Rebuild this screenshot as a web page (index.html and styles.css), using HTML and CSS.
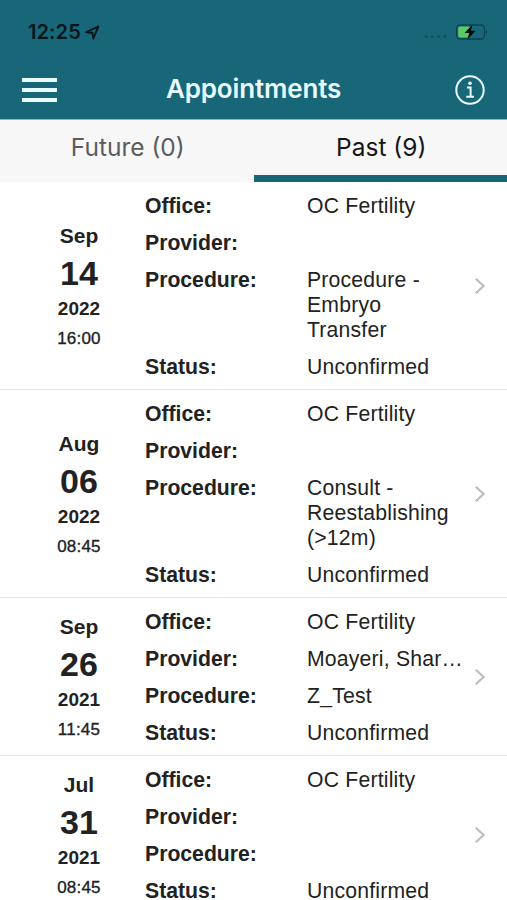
FILE: index.html
```
<!DOCTYPE html>
<html lang="en">

<head>
    <meta charset="UTF-8">
    <meta name="viewport" content="width=device-width, initial-scale=1.0">
    <title>Appointments</title>
    <link rel="stylesheet" href="styles.css">
</head>

<body>

    <header class="header">
        <div class="status-bar">
            <span class="clock">12:25</span>
            <svg class="location" width="15" height="15" viewBox="0 0 15 15">
                <path d="M1.3 7.2 L13.5 1.4 L8.3 13.4 L7.4 7.8 Z" />
            </svg>
            <svg class="signal" width="24" height="5" viewBox="0 0 24 5">
                <circle cx="2" cy="2.5" r="1.2" />
                <circle cx="8.3" cy="2.5" r="1.2" />
                <circle cx="14.6" cy="2.5" r="1.2" />
                <circle cx="21" cy="2.5" r="1.2" />
            </svg>
            <svg class="battery" width="34" height="18" viewBox="0 0 34 18">
                <rect x="1.7" y="2" width="27.8" height="14" rx="3.5" fill="none" stroke="#0d4350" stroke-width="1.3" />
                <path d="M31 7 Q33.4 9 31 11 Z" fill="#0d4350" />
                <rect x="3.2" y="3.5" width="12" height="11" rx="1.6" fill="#5bc964" />
                <path d="M17.5 1.5 L9.5 10 H14.2 L12.4 16.5 L20.6 7.8 H15.8 Z" fill="#02090b" />
            </svg>
        </div>
        <div class="nav-bar">
            <button class="menu" aria-label="Menu"><i></i><i></i><i></i></button>
            <h1>Appointments</h1>
            <button class="info" aria-label="Info">
                <svg width="30" height="30" viewBox="0 0 30 30" fill="none" stroke="#e9fbff">
                    <circle cx="15" cy="15" r="13.7" stroke-width="2" />
                    <path d="M12 12.6 H15.6 V21.6 M11.2 21.8 H19" stroke-width="2" />
                    <circle cx="15" cy="8.3" r="1.8" fill="#e9fbff" stroke="none" />
                </svg>
            </button>
        </div>
    </header>

    <nav class="tabs">
        <a class="tab">Future (0)</a>
        <a class="tab tab--active">Past (9)</a>
    </nav>

    <main class="list">

        <section class="item">
            <div class="date">
                <span class="month">Sep</span>
                <span class="day">14</span>
                <span class="year">2022</span>
                <span class="time">16:00</span>
            </div>
            <dl class="details">
                <dt>Office:</dt><dd>OC Fertility</dd>
                <dt>Provider:</dt><dd></dd>
                <dt>Procedure:</dt><dd class="wrap">Procedure - Embryo Transfer</dd>
                <dt>Status:</dt><dd>Unconfirmed</dd>
            </dl>
            <svg class="chevron" width="12" height="18" viewBox="0 0 12 18"><path d="M1.8 1.8 L9.6 9 L1.8 16.2" /></svg>
        </section>

        <section class="item">
            <div class="date">
                <span class="month">Aug</span>
                <span class="day">06</span>
                <span class="year">2022</span>
                <span class="time">08:45</span>
            </div>
            <dl class="details">
                <dt>Office:</dt><dd>OC Fertility</dd>
                <dt>Provider:</dt><dd></dd>
                <dt>Procedure:</dt><dd class="wrap">Consult - Reestablishing (&gt;12m)</dd>
                <dt>Status:</dt><dd>Unconfirmed</dd>
            </dl>
            <svg class="chevron" width="12" height="18" viewBox="0 0 12 18"><path d="M1.8 1.8 L9.6 9 L1.8 16.2" /></svg>
        </section>

        <section class="item">
            <div class="date">
                <span class="month">Sep</span>
                <span class="day">26</span>
                <span class="year">2021</span>
                <span class="time">11:45</span>
            </div>
            <dl class="details">
                <dt>Office:</dt><dd>OC Fertility</dd>
                <dt>Provider:</dt><dd>Moayeri, Shar…</dd>
                <dt>Procedure:</dt><dd>Z_Test</dd>
                <dt>Status:</dt><dd>Unconfirmed</dd>
            </dl>
            <svg class="chevron" width="12" height="18" viewBox="0 0 12 18"><path d="M1.8 1.8 L9.6 9 L1.8 16.2" /></svg>
        </section>

        <section class="item">
            <div class="date">
                <span class="month">Jul</span>
                <span class="day">31</span>
                <span class="year">2021</span>
                <span class="time">08:45</span>
            </div>
            <dl class="details">
                <dt>Office:</dt><dd>OC Fertility</dd>
                <dt>Provider:</dt><dd></dd>
                <dt>Procedure:</dt><dd></dd>
                <dt>Status:</dt><dd>Unconfirmed</dd>
            </dl>
            <svg class="chevron" width="12" height="18" viewBox="0 0 12 18"><path d="M1.8 1.8 L9.6 9 L1.8 16.2" /></svg>
        </section>

    </main>

</body>

</html>
```
FILE: styles.css
```
* {
    box-sizing: border-box;
}

body {
    margin: 0;
    height: 900px;
    overflow: hidden;
    font-family: "Liberation Sans", Arial, sans-serif;
    font-size: 21px;
    color: #222;
    background-color: #fff;
}

.header {
    height: 120px;
    background-color: #176779;
    border-bottom: 1px solid #8fb6be;
}

.status-bar {
    display: flex;
    align-items: center;
    height: 62px;
    padding: 2px 18px 0 28px;
}

.clock {
    width: 57px;
    font-family: Inter, sans-serif;
    font-size: 20px;
    font-weight: 600;
    letter-spacing: 0.1px;
    color: #03141a;
}

.location {
    fill: none;
    stroke: #03141a;
    stroke-width: 1.9;
    stroke-linejoin: round;
}

.signal {
    margin: 9px 7px 0 auto;
    fill: #0f4c5a;
}

.nav-bar {
    display: flex;
    justify-content: space-between;
    align-items: center;
    height: 55px;
    padding: 0 22px;
}

.nav-bar h1 {
    margin: -2px 0 0 -5px;
    font-family: Inter, sans-serif;
    font-size: 26px;
    font-weight: 600;
    letter-spacing: -0.15px;
    line-height: 32px;
    color: #e9fbff;
}

button {
    padding: 0;
    border: none;
    background: none;
}

.menu {
    display: flex;
    flex-direction: column;
    gap: 6px;
    width: 35px;
}

.menu i {
    height: 4px;
    background-color: #e9fbff;
}

.info,
.info svg {
    display: block;
    width: 30px;
    height: 30px;
}

.tabs {
    display: flex;
    height: 62px;
    background-color: #f7f7f8;
}

.tab {
    flex: 1;
    padding: 11px 0 0 2px;
    border-bottom: 7px solid transparent;
    font-family: Inter, sans-serif;
    font-size: 24.5px;
    line-height: 32px;
    text-align: center;
    color: #5c5c5e;
}

.tab--active {
    color: #161618;
    border-bottom-color: #176779;
}

.item {
    display: flex;
    align-items: center;
    padding: 11px 21px 10px 0;
    border-bottom: 1px solid #e8e8e8;
}

.date {
    display: flex;
    flex-direction: column;
    align-items: center;
    width: 158px;
    margin-right: -13px;
    padding-top: 1px;
    font-weight: 700;
}

.month {
    font-size: 21px;
    line-height: 34px;
}

.day {
    font-size: 34px;
    line-height: 40px;
}

.year {
    font-size: 19px;
    line-height: 31px;
}

.time {
    font-size: 17px;
    font-weight: 400;
    letter-spacing: 0.2px;
    line-height: 30px;
    -webkit-text-stroke: 0.35px #222;
}

.details {
    display: grid;
    grid-template-columns: 162px 158px;
    row-gap: 12px;
    margin: 0;
    line-height: 25px;
}

.details dt {
    font-weight: 700;
    font-size: 21.2px;
}

.details dd {
    margin: 0;
    font-size: 21.2px;
    letter-spacing: 0.2px;
    white-space: nowrap;
}

.details .wrap {
    padding-right: 14px;
    white-space: normal;
}

.chevron {
    margin-left: auto;
    fill: none;
    stroke: #bdbdbf;
    stroke-width: 2.2;
}
```
